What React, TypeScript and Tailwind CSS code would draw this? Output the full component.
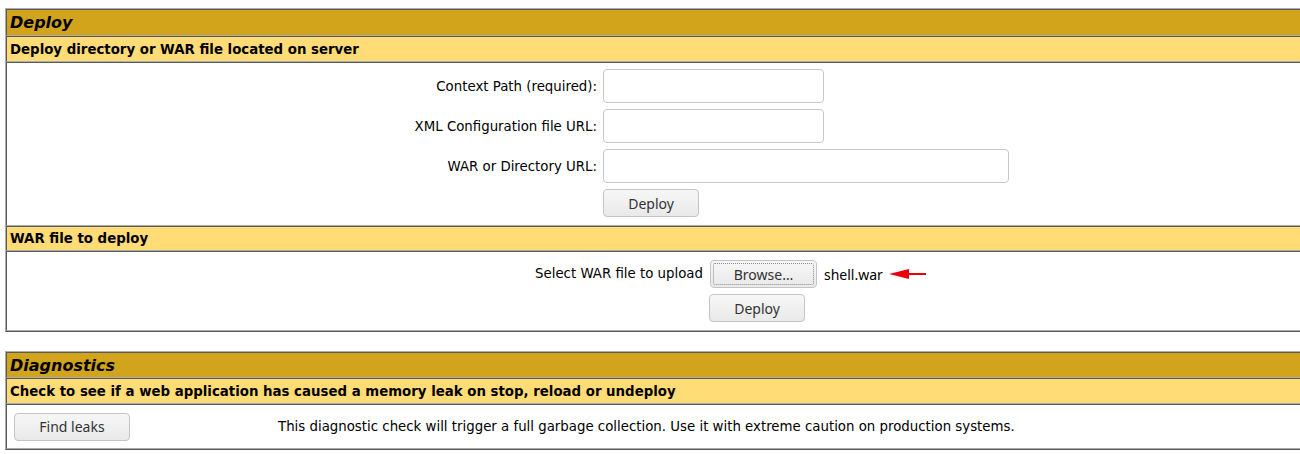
import React from 'react';

const sans = { fontFamily: '"DejaVu Sans", sans-serif' };

const Btn: React.FC<{ label: string; width: string; focus?: boolean }> = ({ label, width, focus }) => {
  return (
    <div
      className={`${width} h-[28px] rounded-[4px] border border-[#c4c4c4] bg-gradient-to-b from-[#f7f7f7] to-[#e9e9e9] text-[#333] text-[14px] flex items-center justify-center p-[2px] font-['Noto_Sans',sans-serif]`}
    >
      <div
        className={`w-full h-full flex items-center justify-center rounded-[2px] ${focus ? 'border border-dotted border-[#8a8a8a]' : ''}`}
      >
        {label}
      </div>
    </div>
  );
};

const Input: React.FC<{ width: string }> = ({ width }) => (
  <div className={`${width} h-[34px] rounded-[4px] border border-[#c8c8c8] bg-white`} />
);

// table-ish blocks, border="1" cellspacing="0" look
const cell = 'border border-t-[#5a5a5a] border-l-[#5a5a5a] border-b-[#acacac] border-r-[#acacac]';

const TitleRow: React.FC<{ text: string; h: string }> = ({ text, h }) => (
  <div className={`${cell} ${h} bg-[#D2A41C] px-[3px] pt-[3px] text-[16px] leading-[19px] font-bold italic text-black`}>
    {text}
  </div>
);

const HeaderRow: React.FC<{ text: string; h: string; pt: string }> = ({ text, h, pt }) => (
  <div className={`${cell} ${h} ${pt} bg-[#FFDC75] px-[3px] text-[13.33px] leading-[19px] font-bold text-black`}>
    {text}
  </div>
);

const Label: React.FC<{ text: string }> = ({ text }) => (
  <div className="h-[34px] pt-[2px] flex items-center justify-end text-[13.33px] text-black whitespace-nowrap">{text}</div>
);

export default function App() {
  return (
    <div className="w-[1300px] h-[454px] overflow-hidden bg-white pl-[5px] pt-[8px]" style={sans}>
      {/* Deploy */}
      <div className="w-[1310px] border border-t-[#acacac] border-l-[#acacac] border-b-[#5a5a5a] border-r-[#5a5a5a]">
        <TitleRow text="Deploy" h="h-[27px]" />
        <HeaderRow text="Deploy directory or WAR file located on server" h="h-[26px]" pt="pt-[3px]" />
        <div className={`${cell} h-[164px] px-[3px] pt-[6px]`}>
          <div className="flex gap-[6px]">
            <div className="w-[587px] flex flex-col gap-[6px]">
              <Label text="Context Path (required):" />
              <Label text="XML Configuration file URL:" />
              <Label text="WAR or Directory URL:" />
            </div>
            <div className="flex flex-col gap-[6px]">
              <Input width="w-[221px]" />
              <Input width="w-[221px]" />
              <Input width="w-[406px]" />
              <Btn label="Deploy" width="w-[96px]" />
            </div>
          </div>
        </div>
        <HeaderRow text="WAR file to deploy" h="h-[25px]" pt="pt-[2px]" />
        <div className={`${cell} h-[80px] px-[3px] pt-[8px]`}>
          <div className="flex gap-[6px]">
            <div className="w-[693px] h-[28px] flex items-center justify-end text-[13.33px] text-black whitespace-nowrap">
              Select WAR file to upload
            </div>
            <div className="flex flex-col gap-[6px]">
              <div className="flex items-center">
                <div className="ml-[1px]">
                  <Btn label="Browse…" width="w-[107px]" focus />
                </div>
                <span className="ml-[7px] text-[14px] text-black font-['Noto_Sans',sans-serif]">shell.war</span>
                <svg className="ml-[6px]" width="38" height="12" viewBox="0 0 38 12">
                  <polygon points="0,6 20,1 20,11" fill="#e8000b" />
                  <line x1="18" y1="6" x2="37" y2="6" stroke="#e8000b" strokeWidth="2" />
                </svg>
              </div>
              <Btn label="Deploy" width="w-[96px]" />
            </div>
          </div>
        </div>
      </div>

      {/* Diagnostics */}
      <div className="mt-[19px] w-[1310px] border border-t-[#acacac] border-l-[#acacac] border-b-[#5a5a5a] border-r-[#5a5a5a]">
        <TitleRow text="Diagnostics" h="h-[26px]" />
        <HeaderRow text="Check to see if a web application has caused a memory leak on stop, reload or undeploy" h="h-[26px]" pt="pt-[3px]" />
        <div className={`${cell} h-[45px] px-[3px] flex items-center`}>
          <div className="ml-[4px]">
            <Btn label="Find leaks" width="w-[116px]" />
          </div>
          <div className="ml-[148px] text-[13.33px] text-black whitespace-nowrap">
            This diagnostic check will trigger a full garbage collection. Use it with extreme caution on production systems.
          </div>
        </div>
      </div>
    </div>
  );
}
